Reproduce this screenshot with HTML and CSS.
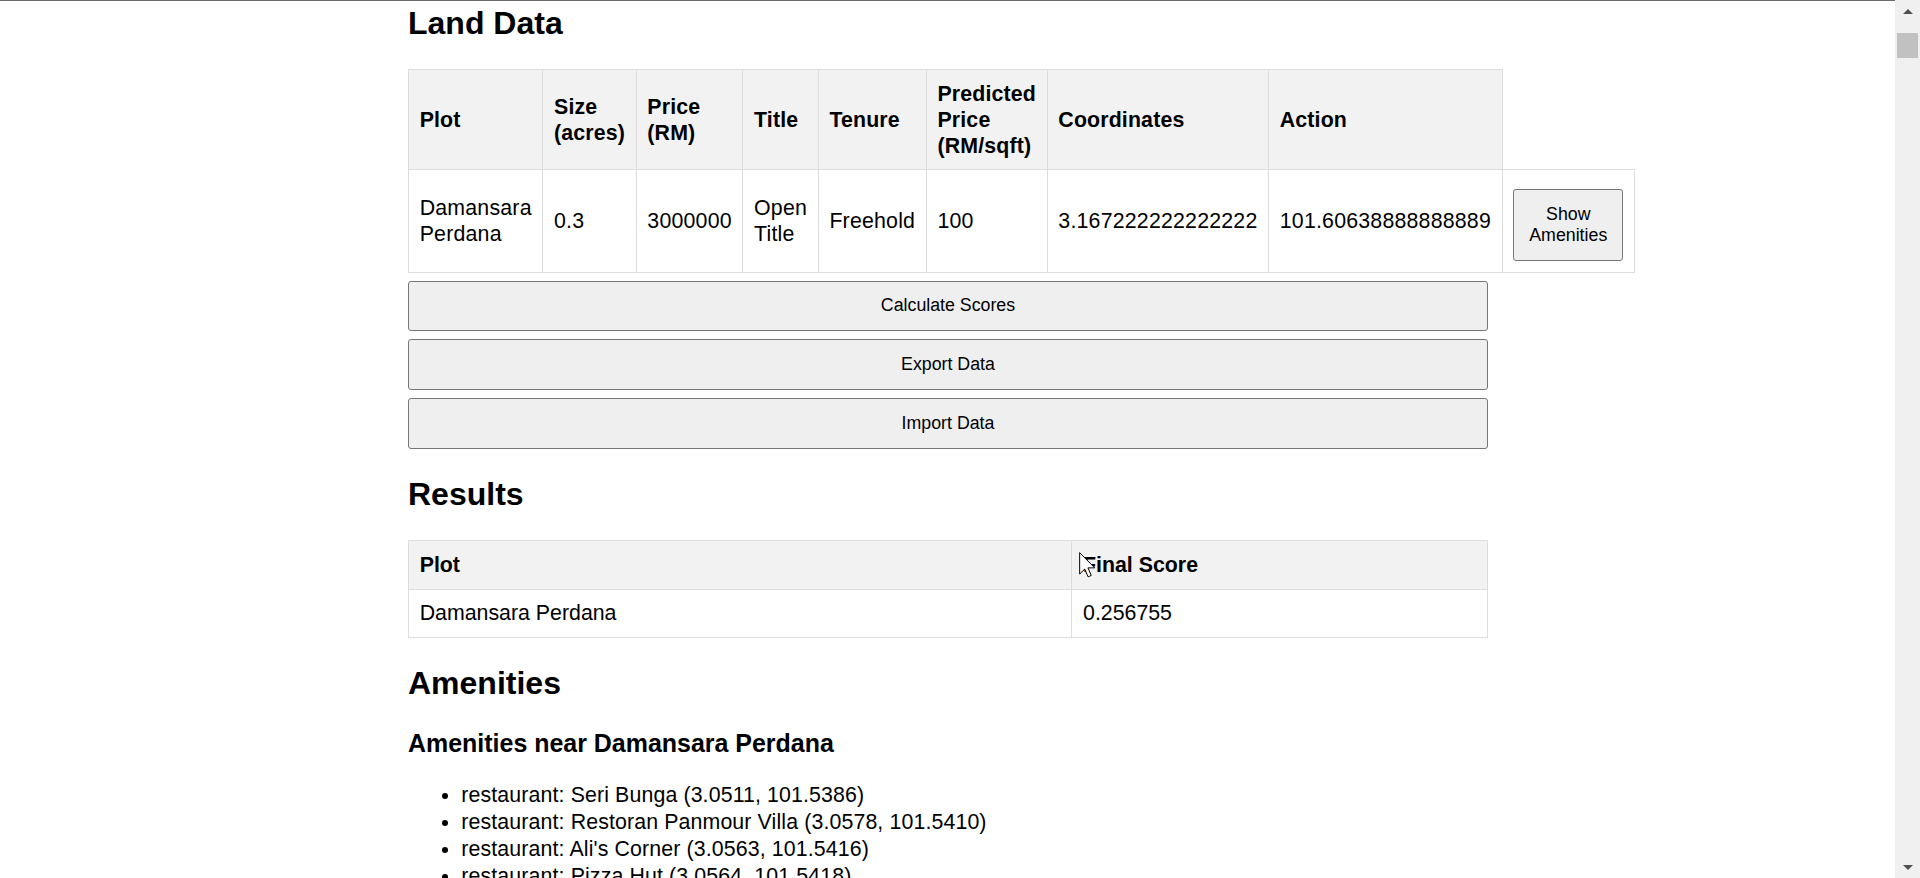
FILE: index.html
```html
<!DOCTYPE html>
<html lang="en">
<head>
<meta charset="utf-8">
<title>Land Data</title>
<link rel="stylesheet" href="styles.css">
</head>
<body>
<div class="window">
  <div class="viewport">
    <div class="topline"></div>
    <div class="container">
      <h2 class="first">Land Data</h2>
      <table class="data">
        <tr>
          <th>Plot</th>
          <th>Size (acres)</th>
          <th>Price (RM)</th>
          <th>Title</th>
          <th>Tenure</th>
          <th>Predicted Price (RM/sqft)</th>
          <th>Coordinates</th>
          <th>Action</th>
        </tr>
        <tr>
          <td>Damansara Perdana</td>
          <td>0.3</td>
          <td>3000000</td>
          <td>Open Title</td>
          <td>Freehold</td>
          <td>100</td>
          <td>3.167222222222222</td>
          <td>101.60638888888889</td>
          <td><button class="btn btn-small">Show Amenities</button></td>
        </tr>
      </table>
      <button class="btn btn-wide">Calculate Scores</button>
      <button class="btn btn-wide">Export Data</button>
      <button class="btn btn-wide">Import Data</button>

      <h2>Results</h2>
      <table class="results">
        <tr>
          <th>Plot</th>
          <th>Final Score</th>
        </tr>
        <tr>
          <td>Damansara Perdana</td>
          <td>0.256755</td>
        </tr>
      </table>

      <h2>Amenities</h2>
      <h3>Amenities near Damansara Perdana</h3>
      <ul class="amenities">
        <li>restaurant: Seri Bunga (3.0511, 101.5386)</li>
        <li>restaurant: Restoran Panmour Villa (3.0578, 101.5410)</li>
        <li>restaurant: Ali's Corner (3.0563, 101.5416)</li>
        <li>restaurant: Pizza Hut (3.0564, 101.5418)</li>
      </ul>
    </div>
  </div>
  <div class="scrollbar">
    <div class="sb-arrow sb-up"></div>
    <div class="sb-track"><div class="sb-thumb"></div></div>
    <div class="sb-arrow sb-down"></div>
  </div>
</div>
<svg class="cursor" width="17" height="26" viewBox="0 0 12.75 19.5" aria-hidden="true">
  <path d="M0.5 0.5 L0.5 16.5 L4.3 12.8 L6.8 18.6 L9.2 17.6 L6.7 11.9 L11.8 11.9 Z" fill="#fff" stroke="#000" stroke-width="0.75" stroke-linejoin="miter"/>
</svg>
</body>
</html>
```

FILE: styles.css
```css
html, body {
  margin: 0;
  padding: 0;
  height: 100%;
  overflow: hidden;
}

body {
  position: relative;
  font-family: "Liberation Sans", Arial, sans-serif;
  font-size: 21.333px;
  line-height: 1.22;
  color: #000;
  background: #fff;
}

.window {
  display: flex;
  height: 878px;
}

.viewport {
  flex: 1;
  overflow: hidden;
}

.topline {
  height: 1px;
  background: #6b6b6b;
}

.container {
  margin-left: 408px;
  width: 1080px;
}

h2 {
  font-size: 32px;
  line-height: 1.2;
  margin: 26.56px 0;
}

h2.first {
  margin-top: 3.2px;
}

h3 {
  font-size: 24.96px;
  line-height: 1.2;
  margin: 24.96px 0 23px 0;
}

table {
  border-collapse: collapse;
  width: 100%;
}

th, td {
  border: 1px solid #dddddd;
  padding: 10.667px;
  text-align: left;
}

.data td {
  letter-spacing: 0.2px;
}

.data th {
  letter-spacing: 0.15px;
}

th {
  background: #f2f2f2;
  font-weight: bold;
}

.btn {
  font-family: "Liberation Sans", Arial, sans-serif;
  font-size: 17.78px;
  line-height: 1.2;
  letter-spacing: 0;
  color: #000;
  background: #efefef;
  border: 1px solid #767676;
  border-radius: 3px;
  margin: 8px 0 0 0;
}

.btn-small {
  padding: 13.67px 15px;
}

.btn-wide {
  display: block;
  width: 100%;
  padding: 13.67px;
}

.amenities {
  margin: 21.33px 0;
  padding-left: 53.33px;
  line-height: 26.9px;
  letter-spacing: 0.12px;
}

.scrollbar {
  width: 25px;
  background: #f0f0f0;
  display: flex;
  flex-direction: column;
}

.sb-arrow {
  height: 22px;
  display: flex;
  align-items: center;
  justify-content: center;
}

.sb-up::before {
  content: "";
  border-left: 5px solid transparent;
  border-right: 5px solid transparent;
  border-bottom: 5px solid #505050;
}

.sb-down::before {
  content: "";
  border-left: 5px solid transparent;
  border-right: 5px solid transparent;
  border-top: 5px solid #505050;
}

.sb-track {
  flex: 1;
  padding: 11px 2px 0 2px;
}

.sb-thumb {
  height: 25px;
  background: #c1c1c1;
}

.cursor {
  position: absolute;
  left: 1079px;
  top: 552px;
}
```
